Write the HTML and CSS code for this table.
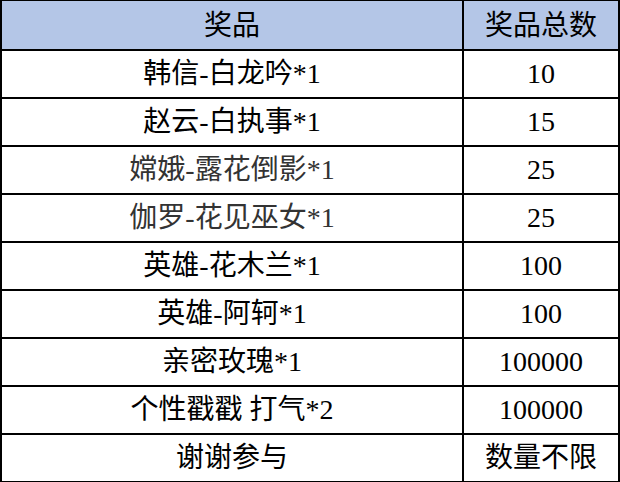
FILE: index.html
```html
<!DOCTYPE html>
<html lang="zh">
<head>
<meta charset="utf-8">
<title>奖品</title>
<link rel="stylesheet" href="styles.css">
</head>
<body>
<div class="prize-table">
  <div class="cell head">奖品</div>
  <div class="cell head">奖品总数</div>
  <div class="cell">韩信-白龙吟*1</div>
  <div class="cell">10</div>
  <div class="cell">赵云-白执事*1</div>
  <div class="cell">15</div>
  <div class="cell soft">嫦娥-露花倒影*1</div>
  <div class="cell">25</div>
  <div class="cell soft">伽罗-花见巫女*1</div>
  <div class="cell">25</div>
  <div class="cell">英雄-花木兰*1</div>
  <div class="cell">100</div>
  <div class="cell">英雄-阿轲*1</div>
  <div class="cell">100</div>
  <div class="cell">亲密玫瑰*1</div>
  <div class="cell">100000</div>
  <div class="cell">个性戳戳 打气*2</div>
  <div class="cell">100000</div>
  <div class="cell">谢谢参与</div>
  <div class="cell">数量不限</div>
</div>
</body>
</html>
```

FILE: styles.css
```css
html, body {
  margin: 0;
  padding: 0;
  background: #ffffff;
}

.prize-table {
  width: 620px;
  height: 482px;
  box-sizing: border-box;
  background: #000000;
  padding: 1px 2px 1px 2px;
  display: grid;
  grid-template-columns: 460px 154px;
  grid-template-rows: 48px;
  grid-auto-rows: 46px;
  gap: 2px;
  font-family: "Liberation Serif", "Noto Sans CJK SC", serif;
  font-size: 28px;
  color: #000000;
}

.cell {
  background: #ffffff;
  display: flex;
  align-items: center;
  justify-content: center;
  line-height: 1;
  white-space: pre;
}

.head {
  background: #b4c6e7;
  padding-top: 2px;
  box-sizing: border-box;
}

.soft {
  color: #333333;
}
```
